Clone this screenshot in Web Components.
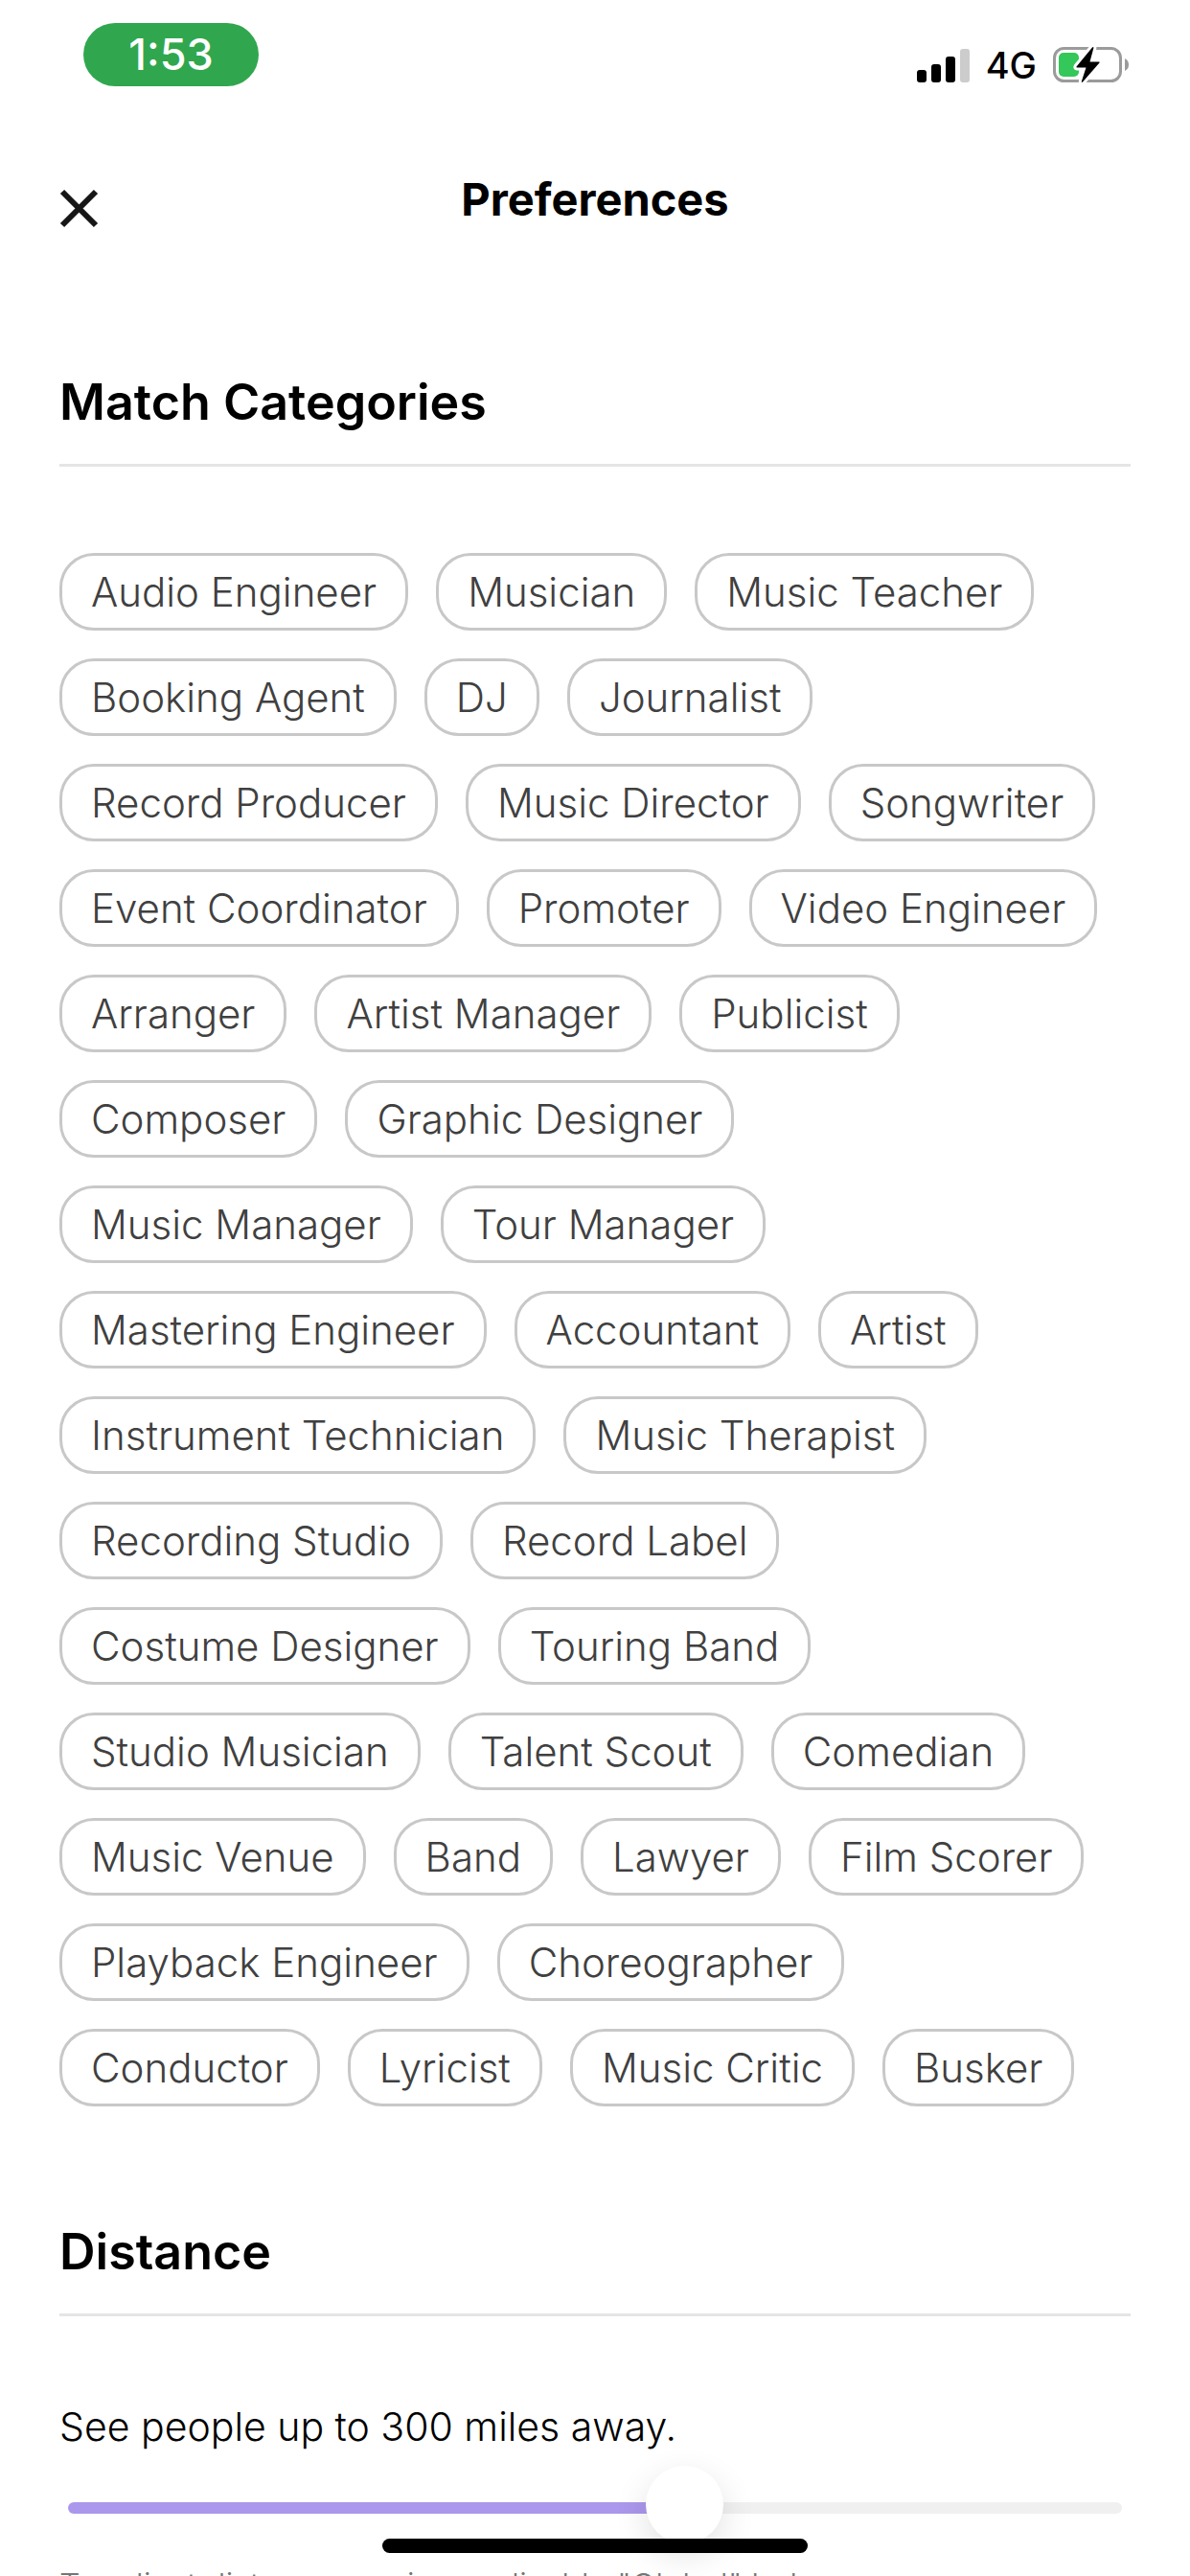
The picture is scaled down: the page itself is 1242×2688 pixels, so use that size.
<!DOCTYPE html>
<html lang="en">
<head>
<meta charset="utf-8">
<meta name="viewport" content="width=device-width, initial-scale=1">
<title>Preferences</title>
<style>
  body {
    margin: 0;
    background: #fff;
    color: #000;
    font-family: Inter, "Liberation Sans", sans-serif;
  }
</style>
</head>
<body>

<app-screen>
  <status-bar slot="status" time="1:53" network="4G"></status-bar>
  <page-header slot="header">Preferences</page-header>

  <pref-section heading="Match Categories">
    <chip-list>
      <pref-chip>Audio Engineer</pref-chip>
      <pref-chip>Musician</pref-chip>
      <pref-chip>Music Teacher</pref-chip>
      <pref-chip>Booking Agent</pref-chip>
      <pref-chip>DJ</pref-chip>
      <pref-chip>Journalist</pref-chip>
      <pref-chip>Record Producer</pref-chip>
      <pref-chip>Music Director</pref-chip>
      <pref-chip>Songwriter</pref-chip>
      <pref-chip>Event Coordinator</pref-chip>
      <pref-chip>Promoter</pref-chip>
      <pref-chip>Video Engineer</pref-chip>
      <pref-chip>Arranger</pref-chip>
      <pref-chip>Artist Manager</pref-chip>
      <pref-chip>Publicist</pref-chip>
      <pref-chip>Composer</pref-chip>
      <pref-chip>Graphic Designer</pref-chip>
      <pref-chip>Music Manager</pref-chip>
      <pref-chip>Tour Manager</pref-chip>
      <pref-chip>Mastering Engineer</pref-chip>
      <pref-chip>Accountant</pref-chip>
      <pref-chip>Artist</pref-chip>
      <pref-chip>Instrument Technician</pref-chip>
      <pref-chip>Music Therapist</pref-chip>
      <pref-chip>Recording Studio</pref-chip>
      <pref-chip>Record Label</pref-chip>
      <pref-chip>Costume Designer</pref-chip>
      <pref-chip>Touring Band</pref-chip>
      <pref-chip>Studio Musician</pref-chip>
      <pref-chip>Talent Scout</pref-chip>
      <pref-chip>Comedian</pref-chip>
      <pref-chip>Music Venue</pref-chip>
      <pref-chip>Band</pref-chip>
      <pref-chip>Lawyer</pref-chip>
      <pref-chip>Film Scorer</pref-chip>
      <pref-chip>Playback Engineer</pref-chip>
      <pref-chip>Choreographer</pref-chip>
      <pref-chip>Conductor</pref-chip>
      <pref-chip>Lyricist</pref-chip>
      <pref-chip>Music Critic</pref-chip>
      <pref-chip>Busker</pref-chip>
    </chip-list>
  </pref-section>

  <pref-section heading="Distance">
    <distance-slider min="10" max="500" value="300">To adjust distance maximum disable "Global" below.</distance-slider>
  </pref-section>
</app-screen>

<script>
function attach(el, html) {
  const template = document.createElement('template');
  template.innerHTML = html;
  el.attachShadow({ mode: 'open' });
  el.shadowRoot.appendChild(template.content.cloneNode(true));
}

class AppScreen extends HTMLElement {
  constructor() {
    super();
    attach(this, `
      <style>
        :host {
          display: flex;
          flex-direction: column;
          height: 100vh;
          overflow: hidden;
        }
        main {
          flex: 1;
          min-height: 0;
          padding: 150px 62px 0;
          overflow: hidden;
          display: flex;
          flex-direction: column;
          gap: 120px;
        }
        ::slotted(*) { flex-shrink: 0; }
        .home {
          position: fixed;
          bottom: 24px;
          left: 50%;
          width: 444px;
          height: 15px;
          margin-left: -222px;
          border-radius: 8px;
          background: #000;
        }
      </style>
      <slot name="status"></slot>
      <slot name="header"></slot>
      <main><slot></slot></main>
      <div class="home"></div>
    `);
  }
}

class StatusBar extends HTMLElement {
  constructor() {
    super();
    attach(this, `
      <style>
        :host {
          display: flex;
          justify-content: space-between;
          align-items: flex-start;
          padding: 24px 63px 0 87px;
        }
        .time {
          width: 183px;
          border-radius: 33px;
          background: #30a74e;
          color: #fff;
          font-size: 45px;
          font-weight: 500;
          line-height: 66px;
          text-align: center;
        }
        .right {
          display: flex;
          align-items: center;
          gap: 17px;
          padding-top: 24px;
          font-size: 38px;
          font-weight: 500;
          line-height: 40px;
        }
        svg { display: block; }
      </style>
      <div class="time"></div>
      <div class="right">
        <svg width="55" height="35" viewBox="0 0 55 35" aria-hidden="true">
          <rect x="0" y="22" width="10" height="13" rx="3"/>
          <rect x="15" y="16" width="10" height="19" rx="3"/>
          <rect x="30" y="8" width="10" height="27" rx="3"/>
          <rect x="45" y="0" width="10" height="35" rx="3" fill="#ccc"/>
        </svg>
        <span class="network"></span>
        <svg width="80" height="40" viewBox="0 0 80 40" aria-hidden="true">
          <rect x="1.5" y="2.5" width="69" height="34" rx="10" fill="none" stroke="#9b9b9b" stroke-width="3"/>
          <path d="M75 13q4 2 4 6.500t-4 6.500z" fill="#9b9b9b"/>
          <rect x="6" y="7" width="21" height="25" rx="5" fill="#34c759"/>
          <path id="bolt" d="M41 1.500 24.500 21.500q-.5 1 .5 1h9.500L29.800 37q0 1.500 1.200.5L48.500 17.500q.5-1-.5-1h-9.500L42.400 2q0-1.500-1.400-.5z"
            stroke="#fff" stroke-width="6" stroke-linejoin="round" paint-order="stroke"/>
        </svg>
      </div>
    `);
  }

  connectedCallback() {
    this.shadowRoot.querySelector('.time').textContent = this.getAttribute('time');
    this.shadowRoot.querySelector('.network').textContent = this.getAttribute('network');
  }
}

class PageHeader extends HTMLElement {
  constructor() {
    super();
    attach(this, `
      <style>
        :host {
          display: grid;
          grid-template-columns: 1fr auto 1fr;
          align-items: start;
          padding: 90px 62px 0;
        }
        button {
          justify-self: start;
          padding: 17px 0 0;
          border: 0;
          background: none;
          cursor: pointer;
        }
        svg { display: block; }
        h1 {
          margin: 0;
          font-size: 47px;
          font-weight: 700;
          line-height: 56px;
        }
      </style>
      <button type="button" aria-label="Close">
        <svg width="41" height="41" viewBox="0 0 41 41" aria-hidden="true">
          <path d="M3 3 38 38M38 3 3 38" stroke="#161616" stroke-width="6"/>
        </svg>
      </button>
      <h1><slot></slot></h1>
    `);
  }
}

class PrefSection extends HTMLElement {
  constructor() {
    super();
    attach(this, `
      <style>
        :host { display: block; }
        h2 {
          margin: 0 0 90px;
          padding-bottom: 32px;
          border-bottom: 3px solid #e5e5e5;
          font-size: 52px;
          font-weight: 600;
          line-height: 64px;
        }
      </style>
      <h2></h2>
      <slot></slot>
    `);
  }

  connectedCallback() {
    this.shadowRoot.querySelector('h2').textContent = this.getAttribute('heading');
  }
}

class ChipList extends HTMLElement {
  constructor() {
    super();
    attach(this, `
      <style>
        :host {
          display: flex;
          flex-wrap: wrap;
          gap: 29px;
          padding-right: 24px;
        }
      </style>
      <slot></slot>
    `);
  }
}

class PrefChip extends HTMLElement {
  constructor() {
    super();
    attach(this, `
      <style>
        :host { display: block; }
        button {
          display: block;
          padding: 0 30px;
          border: 3px solid #c8c8c8;
          border-radius: 36px;
          background: #fff;
          color: #404040;
          font: inherit;
          font-size: 42px;
          font-weight: 340;
          line-height: 75px;
          white-space: nowrap;
          cursor: pointer;
        }
        button[aria-pressed="true"] {
          border-color: #ab97ec;
          background: #ab97ec;
          color: #fff;
        }
      </style>
      <button type="button" aria-pressed="false"><slot></slot></button>
    `);

    const button = this.shadowRoot.querySelector('button');
    button.addEventListener('click', () => {
      const on = button.getAttribute('aria-pressed') === 'true';
      button.setAttribute('aria-pressed', String(!on));
    });
  }
}

class DistanceSlider extends HTMLElement {
  constructor() {
    super();
    attach(this, `
      <style>
        :host {
          display: block;
          font-weight: 340;
        }
        label {
          display: block;
          margin-bottom: 16px;
          font-size: 41px;
          line-height: 50px;
        }
        .slider {
          display: flex;
          padding: 0 9px;
        }
        input {
          -webkit-appearance: none;
          appearance: none;
          flex: 1;
          min-width: 0;
          height: 88px;
          margin: 0;
          background: none;
        }
        input::-webkit-slider-runnable-track {
          height: 12px;
          border-radius: 6px;
          background: linear-gradient(to right, #ab97ec var(--fill), #f0f0f0 var(--fill));
        }
        input::-webkit-slider-thumb {
          -webkit-appearance: none;
          width: 81px;
          height: 81px;
          margin-top: -38px;
          border-radius: 50%;
          background: #fff;
          box-shadow: 0 12px 36px rgba(0, 0, 0, 0.12);
        }
        p {
          margin: 12px 0 0;
          color: #757575;
          font-size: 34px;
          line-height: 50px;
        }
      </style>
      <label for="range"></label>
      <div class="slider"><input id="range" type="range"></div>
      <p><slot></slot></p>
    `);
  }

  connectedCallback() {
    const input = this.shadowRoot.querySelector('input');
    input.min = this.getAttribute('min');
    input.max = this.getAttribute('max');
    input.value = this.getAttribute('value');
    input.addEventListener('input', () => this._update());
    this._update();
  }

  _update() {
    const input = this.shadowRoot.querySelector('input');
    const fill = (input.value - input.min) / (input.max - input.min) * 100;
    input.style.setProperty('--fill', `${fill}%`);
    this.shadowRoot.querySelector('label').textContent = `See people up to ${input.value} miles away.`;
  }
}

customElements.define('app-screen', AppScreen);
customElements.define('status-bar', StatusBar);
customElements.define('page-header', PageHeader);
customElements.define('pref-section', PrefSection);
customElements.define('chip-list', ChipList);
customElements.define('pref-chip', PrefChip);
customElements.define('distance-slider', DistanceSlider);
</script>
</body>
</html>
